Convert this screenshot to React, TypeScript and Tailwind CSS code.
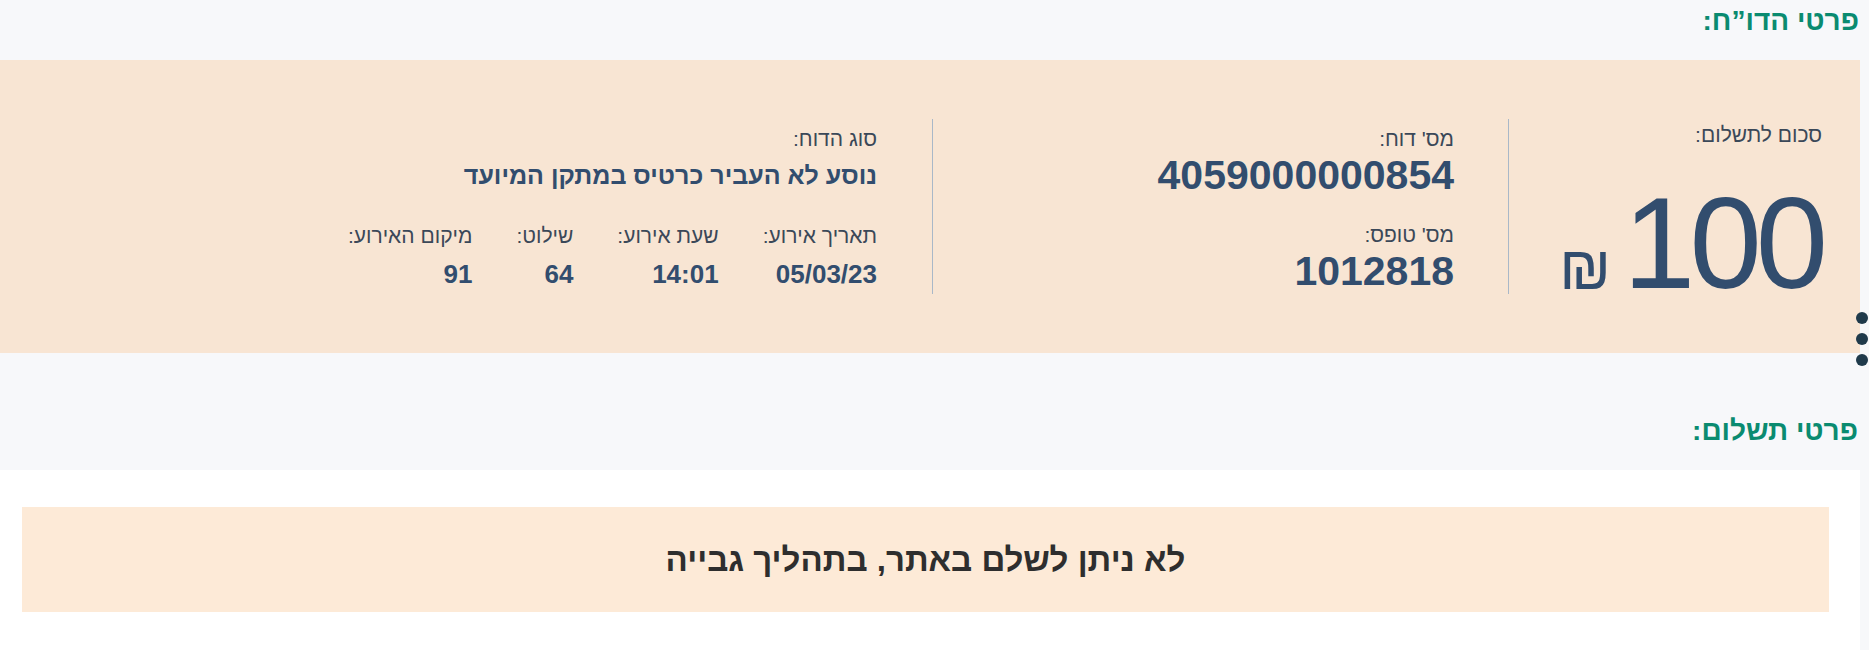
import React from 'react';

const Label: React.FC<{ children: React.ReactNode }> = ({ children }) => (
  <div className="text-[21px] leading-[24px] text-[#3b4858]">{children}</div>
);

const App: React.FC = () => {
  const eventFields = [
    { label: 'תאריך אירוע:', value: '05/03/23' },
    { label: 'שעת אירוע:', value: '14:01' },
    { label: 'שילוט:', value: '64' },
    { label: 'מיקום האירוע:', value: '91' },
  ];

  return (
    <div
      dir="rtl"
      className="relative min-h-[650px] w-[1869px] overflow-hidden bg-[#f7f8fa] pr-[9px] font-['Liberation_Sans',sans-serif]"
    >
      {/* Report details */}
      <section>
        <h2 className="h-[60px] pr-[1px] pt-[5px] text-[28px] font-bold leading-[32px] text-[#0a8b70]">
          פרטי הדו”ח:
        </h2>

        <div className="flex h-[293px] items-stretch bg-[#f8e5d3] py-[59px]">
          {/* Amount */}
          <div className="flex w-[352px] flex-col justify-between border-l border-[#a9b8c8] pr-[38px]">
            <div className="mt-[4px]">
              <Label>סכום לתשלום:</Label>
            </div>
            <div className="mb-[-14px] flex items-end gap-[12px] text-[#324d6e]">
              <span className="text-[130px] leading-[130px] tracking-[-6px]">100</span>
              <span className="mb-[11px] text-[61px] leading-[58px]">₪</span>
            </div>
          </div>

          {/* Report and form numbers */}
          <div className="flex w-[576px] flex-col border-l border-[#a9b8c8] pr-[54px] text-[#324d6e]">
            <div className="mt-[8px]">
              <Label>מס' דוח:</Label>
            </div>
            <div className="mt-[2px] text-[41px] font-bold leading-[44px]">4059000000854</div>
            <div className="mt-[26px]">
              <Label>מס' טופס:</Label>
            </div>
            <div className="mt-[2px] text-[41px] font-bold leading-[44px]">1012818</div>
          </div>

          {/* Report type and event */}
          <div className="flex flex-1 flex-col pr-[55px] text-[#324d6e]">
            <div className="mt-[8px]">
              <Label>סוג הדוח:</Label>
            </div>
            <div className="mt-[10px] text-[25px] font-bold leading-[28px]">נוסע לא העביר כרטיס במתקן המיועד</div>
            <div className="mt-[35px] flex gap-[44px]">
              {eventFields.map((f) => (
                <div key={f.label} className="flex flex-col">
                  <Label>{f.label}</Label>
                  <div className="mt-[12px] text-[26px] font-bold leading-[28px]">{f.value}</div>
                </div>
              ))}
            </div>
          </div>
        </div>
      </section>

      {/* Payment details */}
      <section>
        <h2 className="flex h-[117px] items-end pb-[23px] pr-[2px] text-[28px] font-bold leading-[32px] text-[#0a8b70]">
          פרטי תשלום:
        </h2>
        <div className="h-[180px] bg-white pt-[37px] pl-[22px] pr-[31px]">
          <div className="flex h-[105px] items-center justify-center bg-[#fdead7] text-[33px] font-bold text-[#2e2e2e]">
            לא ניתן לשלם באתר, בתהליך גבייה
          </div>
        </div>
      </section>

      {/* side menu dots */}
      <div className="absolute left-[1856px] top-[312px] flex flex-col gap-[9px]">
        <span className="h-[12px] w-[12px] rounded-full bg-[#1f3a4b]" />
        <span className="h-[12px] w-[12px] rounded-full bg-[#1f3a4b]" />
        <span className="h-[12px] w-[12px] rounded-full bg-[#1f3a4b]" />
      </div>
    </div>
  );
};

export default App;
